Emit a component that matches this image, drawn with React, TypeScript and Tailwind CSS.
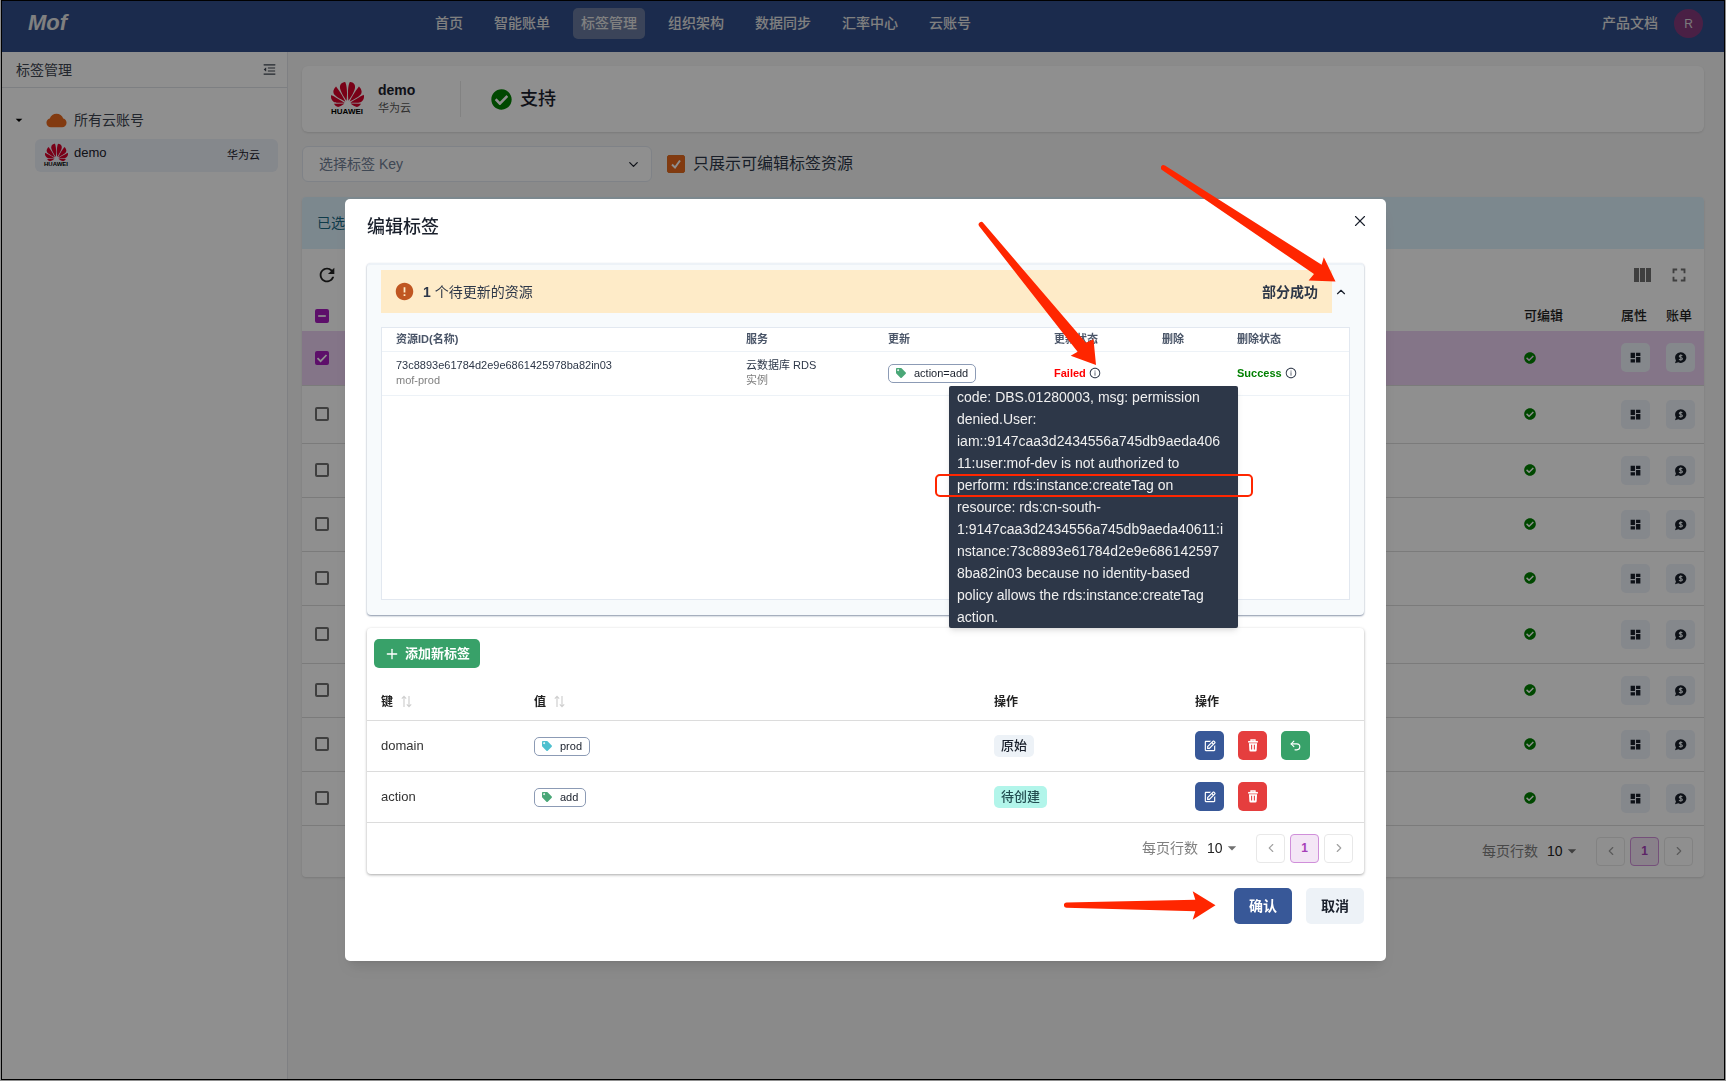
import { useState } from 'react';
import type { ReactNode } from 'react';
import { ChevronDown, ChevronLeft, ChevronRight, ChevronUp, Plus, Undo2, X } from 'lucide-react';
import { AiFillCloud, AiOutlineMenuFold, AiOutlineInfoCircle } from 'react-icons/ai';
import { BiEdit } from 'react-icons/bi';
import { FaCheckCircle, FaTag } from 'react-icons/fa';
import { MdArrowDropDown, MdDashboard, MdError, MdFullscreen, MdRefresh } from 'react-icons/md';
import { SiHuawei } from 'react-icons/si';

const navItems = ['首页', '智能账单', '标签管理', '组织架构', '数据同步', '汇率中心', '云账号'];

const resourceRows = [
  { selected: true, height: 'h-[54px]' },
  { selected: false, height: 'h-[58px]' },
  { selected: false, height: 'h-[54px]' },
  { selected: false, height: 'h-[54px]' },
  { selected: false, height: 'h-[54px]' },
  { selected: false, height: 'h-[58px]' },
  { selected: false, height: 'h-[54px]' },
  { selected: false, height: 'h-[54px]' },
  { selected: false, height: 'h-[54px]' },
];

const tagRows = [
  { name: 'domain', value: 'prod', color: 'text-[#4fc0cf]', state: '原始', badge: 'bg-[#edf2f7] text-[#1a202c]', undo: true },
  { name: 'action', value: 'add', color: 'text-[#4aa777]', state: '待创建', badge: 'bg-[#b2f5ea] text-[#234e52]', undo: false },
];

const errorLines = [
  'code: DBS.01280003, msg: permission',
  'denied.User:',
  'iam::9147caa3d2434556a745db9aeda406',
  '11:user:mof-dev is not authorized to',
  'perform: rds:instance:createTag on',
  'resource: rds:cn-south-',
  '1:9147caa3d2434556a745db9aeda40611:i',
  'nstance:73c8893e61784d2e9e686142597',
  '8ba82in03 because no identity-based',
  'policy allows the rds:instance:createTag',
  'action.',
];

function Huawei({ small = false }: { small?: boolean }) {
  return (
    <span className={small ? 'flex w-6 flex-col items-center' : 'flex w-[34px] flex-col items-center'}>
      <span className={small ? 'flex h-[17px] items-center' : 'flex h-6 items-center'}>
        <SiHuawei className="text-[#d8002a]" size={small ? 23 : 33} />
      </span>
      <span
        className={
          small
            ? 'text-[6px] leading-[6px] font-bold text-black'
            : 'mt-0.5 text-[8px] leading-[8px] font-bold text-black'
        }
      >
        HUAWEI
      </span>
    </span>
  );
}

function TableCheck({ label, state }: { label: string; state: 'on' | 'off' | 'mixed' }) {
  return (
    <span className="grid size-4 place-items-center">
      <input
        type="checkbox"
        aria-label={label}
        defaultChecked={state !== 'off'}
        className="col-start-1 row-start-1 size-[14px] appearance-none rounded-[2px] border-2 border-[#707070] checked:border-[#a61bbd] checked:bg-[#a61bbd]"
      />
      {state !== 'off' && (
        <svg viewBox="0 0 14 14" className="pointer-events-none col-start-1 row-start-1 size-[14px]" fill="none" stroke="white" strokeWidth="1.7">
          <path d={state === 'on' ? 'M2.5 7.2 5.6 10.2 11.5 4' : 'M3.2 7H10.8'} />
        </svg>
      )}
    </span>
  );
}

function BillIcon() {
  return (
    <svg viewBox="0 0 16 16" className="size-[13px]" fill="none">
      <path d="M8.3 1.4a6.8 6.6 0 1 1-3 12.5L1.2 15l1.2-3.4A6.7 6.7 0 0 1 8.3 1.4z" fill="#1a202c" />
      <path d="M10.3 5.9C9.9 5 6.5 4.7 6.5 6.5c0 1.8 3.900 1 3.900 3 0 1.900-3.500 1.700-4.100.3M8.400 3.900v8.200" stroke="#edf2f7" strokeWidth="1.3" />
    </svg>
  );
}

function TrashIcon() {
  return (
    <svg viewBox="0 0 14 16" className="h-[13px] w-3" fill="none">
      <path d="M4.5 2.5V1.2h5v1.3" stroke="white" strokeWidth="1.6" />
      <path d="M1 2.4h12v2H1z" fill="white" />
      <path d="M2 5.2h10l-.5 8.6a1.6 1.6 0 0 1-1.6 1.5H4.1a1.6 1.6 0 0 1-1.6-1.5z" fill="white" />
      <path d="M5.3 7v6M8.7 7v6" stroke="#e53e3e" strokeWidth="1.3" />
    </svg>
  );
}

function SortIcon() {
  return (
    <svg viewBox="0 0 11 13" className="h-[13px] w-[11px]" fill="none" stroke="#d0d0d0" strokeWidth="1.2">
      <path d="M3 12V1.5M.8 3.6 3 1.3l2.200 2.300M8 1v10.500M5.800 9.400 8 11.700l2.200-2.300" />
    </svg>
  );
}

function TagChip({ color, children }: { color: string; children: ReactNode }) {
  return (
    <span className="inline-flex h-[19px] items-center gap-2 rounded-[5px] border border-[#8c9bb5] bg-white px-[7px] align-middle text-[11px] text-[#1a202c]">
      <FaTag className={color} size={10} />
      {children}
    </span>
  );
}

function Pagination() {
  return (
    <div className="flex h-[51px] items-center justify-end pr-[11px]">
      <label className="mr-[17px] flex items-center text-sm text-[#808080]">
        每页行数
        <span className="relative ml-[9px] flex items-center">
          <select className="w-8 appearance-none bg-transparent text-sm text-[#222]" defaultValue="10">
            <option>10</option>
          </select>
          <MdArrowDropDown className="pointer-events-none absolute right-0 translate-x-[3px] text-[#707070]" size={20} />
        </span>
      </label>
      <div className="flex gap-[5px]">
        <button aria-label="上一页" className="grid size-[29px] place-items-center rounded-[4px] border border-[#e8e8e8] text-[#a0a0a0]">
          <ChevronLeft size={14} />
        </button>
        <button className="grid size-[29px] place-items-center rounded-[4px] border border-[#d08fda] bg-[#f4e6f6] text-xs font-bold text-[#a63fb8]">
          1
        </button>
        <button aria-label="下一页" className="grid size-[29px] place-items-center rounded-[4px] border border-[#e8e8e8] text-[#a0a0a0]">
          <ChevronRight size={14} />
        </button>
      </div>
    </div>
  );
}

function Header() {
  return (
    <header className="flex h-[51px] items-start bg-[#314e89] text-[#e4e4e4]">
      <a href="#" className="mt-2 ml-[26px] w-[399px] text-[22px] leading-7 font-bold italic">
        Mof
      </a>
      <nav className="mt-[7px] flex gap-[15px]">
        {navItems.map((item) => (
          <a
            key={item}
            href="#"
            className={
              item === '标签管理'
                ? 'rounded-[5px] bg-[#6a7a9f] px-2 text-sm leading-[31px] font-medium'
                : 'px-2 text-sm leading-[31px] font-medium'
            }
          >
            {item}
          </a>
        ))}
      </nav>
      <a href="#" className="mt-[7px] ml-auto text-sm leading-[31px] font-medium">
        产品文档
      </a>
      <button aria-label="账户" className="mt-2 mr-[21px] ml-4 size-[29px] rounded-full bg-[#853a7c] text-xs text-[#dcdcdc]">
        R
      </button>
    </header>
  );
}

function Sidebar() {
  return (
    <aside className="w-[286px] shrink-0 border-r border-[#e2e4ea] bg-white text-[#3d4450]">
      <div className="flex h-9 items-center justify-between border-b border-[#dfe2e8] pr-2.5 pl-[14px]">
        <h2 className="text-sm">标签管理</h2>
        <button aria-label="收起">
          <AiOutlineMenuFold size={15} />
        </button>
      </div>
      <div className="pt-5 pr-[9px] pl-[9px]">
        <button className="flex h-6 items-center text-sm">
          <MdArrowDropDown size={16} className="mr-[18px] text-black" />
          <AiFillCloud size={23} className="mr-1.5 text-[#e8681d]" />
          所有云账号
        </button>
        <a href="#" className="mt-[7px] ml-6 flex h-[33px] items-center rounded-md bg-[#edf2fa] pr-[18px] pl-[9px] text-[#1a202c]">
          <Huawei small />
          <span className="ml-1.5 flex-1 self-start text-[13px] leading-7">demo</span>
          <span className="text-[11px]">华为云</span>
        </a>
      </div>
    </aside>
  );
}

function ResourceTable() {
  return (
    <section className="mt-[15px] rounded bg-white shadow">
      <div className="flex h-[52px] items-center rounded-t bg-[#def2fd] px-[15px] text-sm text-[#1c6a85]">已选择 1 个资源</div>
      <div className="flex h-[51px] items-center px-[14px]">
        <button aria-label="刷新">
          <MdRefresh size={22} className="text-[#222]" />
        </button>
        <button aria-label="列" className="mr-4 ml-auto">
          <svg viewBox="0 0 18 14" className="h-[14px] w-[18px]" fill="#707070">
            <path d="M0 0h5v14H0zM6 0h5v14H6zM12 0h5v14h-5z" />
          </svg>
        </button>
        <button aria-label="全屏">
          <MdFullscreen size={22} className="text-[#707070]" />
        </button>
      </div>
      <table className="w-full table-fixed">
        <colgroup>
          <col className="w-[42px]" />
          <col />
          <col className="w-[97px]" />
          <col className="w-[45px]" />
          <col className="w-[38px]" />
        </colgroup>
        <thead>
          <tr className="h-[31px] text-left text-[13px] text-[#222]">
            <th className="pl-3">
              <TableCheck label="全选" state="mixed" />
            </th>
            <th />
            <th className="font-medium">可编辑</th>
            <th className="font-medium">属性</th>
            <th className="font-medium">账单</th>
          </tr>
        </thead>
        <tbody>
          {resourceRows.map((row, i) => (
            <tr key={i} className={`${row.height} border-b border-[#dcdcdc] ${row.selected ? 'bg-[#ebd0f3]' : ''}`}>
              <td className="pl-3">
                <TableCheck label={`选择第 ${i + 1} 行`} state={row.selected ? 'on' : 'off'} />
              </td>
              <td />
              <td>
                <FaCheckCircle className="text-[#008000]" size={12} />
              </td>
              <td>
                <button aria-label="属性" className="grid size-[29px] place-items-center rounded-[5px] bg-[#edf2fa] text-[#1a202c]">
                  <MdDashboard size={13} />
                </button>
              </td>
              <td>
                <button aria-label="账单" className="grid size-[29px] place-items-center rounded-[5px] bg-[#edf2fa]">
                  <BillIcon />
                </button>
              </td>
            </tr>
          ))}
        </tbody>
      </table>
      <Pagination />
    </section>
  );
}

function Main() {
  return (
    <main className="flex-1 bg-[#f7f7f7] pt-[14px] pr-5 pl-[14px]">
      <section className="flex h-[66px] items-center rounded-md bg-white pl-7 shadow-sm">
        <Huawei />
        <div className="ml-[14px] w-[83px] border-r border-[#e8e8e8]">
          <h1 className="text-sm leading-[18px] font-bold text-[#1a202c]">demo</h1>
          <p className="text-[11px] leading-[18px] text-[#555]">华为云</p>
        </div>
        <FaCheckCircle size={21} className="ml-[30px] text-[#008000]" />
        <span className="ml-2 text-lg font-medium text-[#1a202c]">支持</span>
      </section>
      <div className="mt-[14px] flex items-center">
        <div className="relative w-[350px]">
          <select
            aria-label="选择标签 Key"
            className="h-9 w-full appearance-none rounded-md border border-[#e2e8f0] bg-white px-4 text-sm text-[#718096]"
          >
            <option>选择标签 Key</option>
          </select>
          <ChevronDown size={15} className="pointer-events-none absolute top-[11px] right-[11px] text-[#1a202c]" />
        </div>
        <label className="ml-[15px] flex items-center text-base text-[#2d3748]">
          <span className="mr-2 grid place-items-center">
            <input
              type="checkbox"
              defaultChecked
              className="col-start-1 row-start-1 size-[18px] appearance-none rounded-[2px] border border-[#dd6b20] checked:bg-[#e8681d]"
            />
            <svg viewBox="0 0 18 18" className="pointer-events-none col-start-1 row-start-1 size-[18px]" fill="none" stroke="white" strokeWidth="2">
              <path d="M5 9.5 8 12.5 13 5.5" />
            </svg>
          </span>
          只展示可编辑标签资源
        </label>
      </div>
      <ResourceTable />
    </main>
  );
}

function UpdatePanel() {
  return (
    <section className="rounded-[4px] border-t-2 border-[#edf2f7] bg-[#f7fafc] px-[14px] pt-[5px] pb-[15px] shadow-[0_1px_2px_#8793a7]">
      <div className="flex items-center">
        <div className="flex h-[43px] flex-1 items-center bg-[#feebc8] px-[14px] text-sm text-[#2d3748]">
          <MdError size={21} className="mr-2 -ml-px text-[#c05621]" />
          <span>
            <b>1</b> 个待更新的资源
          </span>
          <b className="ml-auto font-bold">部分成功</b>
        </div>
        <button aria-label="收起" className="grid w-[18px] place-items-center text-[#1a202c]">
          <ChevronUp size={14} />
        </button>
      </div>
      <div className="mt-[14px] h-[273px] border border-[#e2e8f0] bg-white">
        <table className="w-full table-fixed text-left text-[11px]">
          <colgroup>
            <col />
            <col className="w-[142px]" />
            <col className="w-[166px]" />
            <col className="w-[108px]" />
            <col className="w-[75px]" />
            <col className="w-[112px]" />
          </colgroup>
          <thead>
            <tr className="h-[23px] border-b border-[#edf2f7] text-[#4a5568]">
              <th className="pl-[14px] font-bold">资源ID(名称)</th>
              <th className="font-bold">服务</th>
              <th className="font-bold">更新</th>
              <th className="font-bold">更新状态</th>
              <th className="font-bold">删除</th>
              <th className="font-bold">删除状态</th>
            </tr>
          </thead>
          <tbody>
            <tr className="h-11 border-b border-[#edf2f7] text-[#2d3748]">
              <td className="pl-[14px] leading-[15px]">
                73c8893e61784d2e9e6861425978ba82in03
                <div className="text-[#808080]">mof-prod</div>
              </td>
              <td className="leading-[15px]">
                云数据库 RDS
                <div className="text-[#808080]">实例</div>
              </td>
              <td>
                <TagChip color="text-[#4aa777]">action=add</TagChip>
              </td>
              <td>
                <span className="flex items-center gap-[3px] font-bold text-[#ff0000]">
                  Failed
                  <AiOutlineInfoCircle size={12} className="text-[#2d3748]" />
                </span>
              </td>
              <td />
              <td>
                <span className="flex items-center gap-[3px] font-bold text-[#008000]">
                  Success
                  <AiOutlineInfoCircle size={12} className="text-[#2d3748]" />
                </span>
              </td>
            </tr>
          </tbody>
        </table>
      </div>
    </section>
  );
}

function TagPanel() {
  return (
    <section className="mt-[13px] rounded-[4px] bg-white shadow-[0_1px_3px_#a8a8a8]">
      <div className="px-[7px] pt-[11px]">
        <button className="flex h-[29px] items-center rounded-[5px] bg-[#38a169] px-2.5 text-[13px] font-bold text-white">
          <Plus size={16} className="mr-[5px]" />
          添加新标签
        </button>
      </div>
      <table className="mt-4 w-full table-fixed text-left">
        <colgroup>
          <col className="w-[167px]" />
          <col />
          <col className="w-[201px]" />
          <col className="w-[169px]" />
        </colgroup>
        <thead>
          <tr className="h-9 border-b border-[#dcdcdc] text-xs text-[#222]">
            <th className="pl-[14px]">
              <button className="flex items-center gap-2 font-bold">
                键 <SortIcon />
              </button>
            </th>
            <th>
              <button className="flex items-center gap-2 font-bold">
                值 <SortIcon />
              </button>
            </th>
            <th className="font-bold">操作</th>
            <th className="font-bold">操作</th>
          </tr>
        </thead>
        <tbody>
          {tagRows.map((row) => (
            <tr key={row.name} className="h-[51px] border-b border-[#dcdcdc]">
              <td className="pl-[14px] text-[13px] text-[#333]">{row.name}</td>
              <td>
                <TagChip color={row.color}>{row.value}</TagChip>
              </td>
              <td>
                <span className={`inline-block h-[22px] rounded-[5px] px-[7px] align-middle text-[13px] leading-[22px] font-medium ${row.badge}`}>
                  {row.state}
                </span>
              </td>
              <td>
                <div className="flex gap-[14px] text-white">
                  <button aria-label="编辑" className="grid size-[29px] place-items-center rounded-[5px] bg-[#385898]">
                    <BiEdit size={14} />
                  </button>
                  <button aria-label="删除" className="grid size-[29px] place-items-center rounded-[5px] bg-[#e53e3e]">
                    <TrashIcon />
                  </button>
                  {row.undo && (
                    <button aria-label="撤销" className="grid size-[29px] place-items-center rounded-[5px] bg-[#38a169]">
                      <Undo2 size={13} />
                    </button>
                  )}
                </div>
              </td>
            </tr>
          ))}
        </tbody>
      </table>
      <Pagination />
    </section>
  );
}

function Annotations() {
  return (
    <>
      <div
        role="tooltip"
        className="absolute top-[187px] right-[148px] w-[289px] rounded-[2px] bg-[#2d3748] px-2 text-sm leading-[22px] text-[#f0f0f0] shadow-md"
      >
        {errorLines.map((line) => (
          <div key={line} className="whitespace-nowrap">
            {line}
          </div>
        ))}
      </div>
      <div className="absolute top-[275px] right-[133px] h-[23px] w-[318px] rounded-[5px] border-2 border-[#ff2600]" />
      <svg viewBox="1161 164 176 119" className="absolute -top-[35px] right-[49px] h-[119px] w-[176px]" fill="#ff2600">
        <path d="M1165 165.5 1321.6 264.7 1323.8 257.3 1335.5 281.5 1308.6 280.5 1314 274 1162 170a2.7 2.7 0 0 1 3-4.5z" />
      </svg>
      <svg viewBox="978 221 120 150" className="absolute top-[22px] right-[288px] h-[150px] w-[120px]" fill="#ff2600">
        <path d="M983.3 223 1085.9 342.7 1093.5 339.3 1096 365 1070.7 355.7 1077.6 351.7 979.2 226.2a2.6 2.6 0 0 1 4.1-3.2z" />
      </svg>
      <svg viewBox="1064 890 152 31" className="absolute top-[691px] right-[170px] h-[31px] w-[152px]" fill="#ff2600">
        <path d="M1066.5 902.5 1195.3 899.7 1192.7 891.3 1215.5 905.3 1192.7 919.7 1195.3 911.3 1066.5 907.7a2.6 2.6 0 0 1 0-5.2z" />
      </svg>
    </>
  );
}

function EditTagsDialog({ onClose }: { onClose: () => void }) {
  return (
    <div className="fixed inset-0 overflow-y-auto bg-black/44 pt-[199px] pr-[340px] pb-6 pl-[345px]">
      <div
        role="dialog"
        aria-modal="true"
        aria-labelledby="dialog-title"
        className="relative rounded-[5px] bg-white pt-[13px] pr-[22px] pb-[37px] pl-[22px] shadow-lg"
      >
        <h2 id="dialog-title" className="mb-[21px] text-lg leading-[30px] font-medium text-[#1a202c]">
          编辑标签
        </h2>
        <button aria-label="关闭" onClick={onClose} className="absolute top-[13px] right-[17px] text-[#1a202c]">
          <X size={18} strokeWidth={1.5} />
        </button>
        <UpdatePanel />
        <TagPanel />
        <div className="mt-[14px] flex justify-end gap-[14px] text-sm font-bold">
          <button onClick={onClose} className="h-9 w-[58px] rounded-[5px] bg-[#385898] text-white">
            确认
          </button>
          <button onClick={onClose} className="h-9 w-[58px] rounded-[5px] bg-[#edf2f7] text-[#1a202c]">
            取消
          </button>
        </div>
        <Annotations />
      </div>
    </div>
  );
}

export default function App() {
  const [open, setOpen] = useState(true);
  return (
    <div className="flex min-h-screen flex-col bg-white px-px pb-px font-['Liberation_Sans','Noto_Sans_CJK_SC',sans-serif]">
      <div className="flex flex-1 flex-col border border-black">
        <Header />
        <div className="flex flex-1">
          <Sidebar />
          <Main />
        </div>
      </div>
      {open && <EditTagsDialog onClose={() => setOpen(false)} />}
    </div>
  );
}
